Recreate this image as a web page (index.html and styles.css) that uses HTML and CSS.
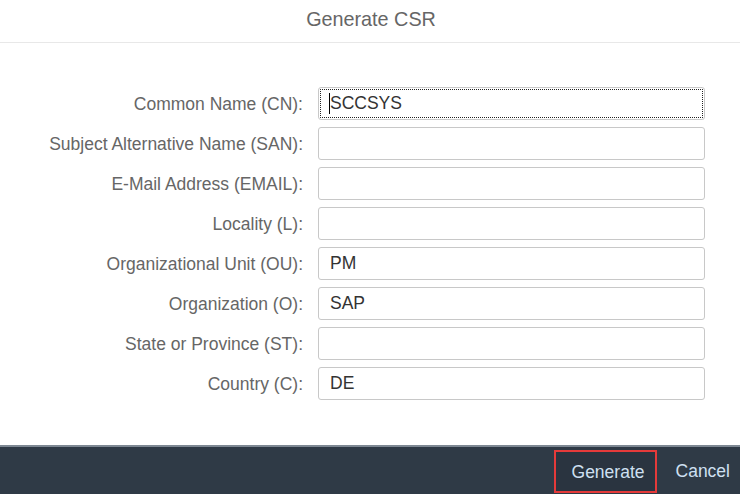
FILE: index.html
```html
<!DOCTYPE html>
<html>
<head>
<meta charset="utf-8">
<link rel="stylesheet" href="styles.css">
</head>
<body>
<div class="dialog">
  <header class="header"><h1 class="title">Generate CSR</h1></header>
  <main class="content">
    <form class="form">
      <label class="label">Common Name (CN):</label>
      <div class="input focused"><span class="caret"></span>SCCSYS</div>
      <label class="label">Subject Alternative Name (SAN):</label>
      <div class="input"></div>
      <label class="label">E-Mail Address (EMAIL):</label>
      <div class="input"></div>
      <label class="label">Locality (L):</label>
      <div class="input"></div>
      <label class="label">Organizational Unit (OU):</label>
      <div class="input">PM</div>
      <label class="label">Organization (O):</label>
      <div class="input">SAP</div>
      <label class="label">State or Province (ST):</label>
      <div class="input"></div>
      <label class="label">Country (C):</label>
      <div class="input">DE</div>
    </form>
  </main>
  <footer class="footer">
    <button class="btn btn-primary" type="button">Generate</button>
    <button class="btn btn-cancel" type="button">Cancel</button>
  </footer>
</div>
</body>
</html>
```
FILE: styles.css
```css
html, body {
  margin: 0;
  padding: 0;
  background: #ffffff;
}
body {
  font-family: "Liberation Sans", Arial, sans-serif;
  width: 740px;
  height: 494px;
  overflow: hidden;
}
.dialog {
  display: flex;
  flex-direction: column;
  height: 494px;
}
.header {
  height: 42px;
  border-bottom: 1px solid #e8e8e8;
  display: flex;
  justify-content: center;
  align-items: center;
}
.title {
  margin: 0;
  font-weight: normal;
  font-size: 19.8px;
  color: #666666;
  padding-left: 2px;
  margin-top: -3px;
}
.content {
  flex: 1;
  padding-top: 44px;
}
.form {
  display: grid;
  grid-template-columns: 303px 387px;
  column-gap: 15px;
  row-gap: 7px;
  grid-auto-rows: 33px;
  margin: 0;
}
.label {
  text-align: right;
  font-size: 17.5px;
  color: #666666;
  align-self: center;
  padding-top: 1px;
}
.input {
  box-sizing: border-box;
  border: 1px solid #c8c8c8;
  border-radius: 3px;
  background: #fff;
  font-size: 17.5px;
  color: #333333;
  padding: 0 11px;
  line-height: 31px;
  position: relative;
}
.input.focused {
  outline: 1px dotted #222;
  outline-offset: -3px;
}
.caret {
  position: absolute;
  left: 10px;
  top: 5px;
  width: 1px;
  height: 21px;
  background: #000;
}
.footer {
  height: 47px;
  background: #2f3a46;
  border-top: 2px solid #7e8893;
  display: flex;
  justify-content: flex-end;
  align-items: center;
  padding-right: 8px;
}
.btn {
  background: transparent;
  border: 2px solid transparent;
  font-family: "Liberation Sans", Arial, sans-serif;
  font-size: 17.5px;
  color: #cfe0f2;
  height: 43px;
  cursor: pointer;
  box-sizing: border-box;
}
.btn-primary {
  border-color: #e53a3a;
  width: 103px;
  padding: 2px 11px 0 16px;
  text-align: left;
  background: #2a3440;
  margin-top: 2px;
}
.btn-cancel {
  padding: 2px 0 0 0;
  margin-left: 17px;
}
```
